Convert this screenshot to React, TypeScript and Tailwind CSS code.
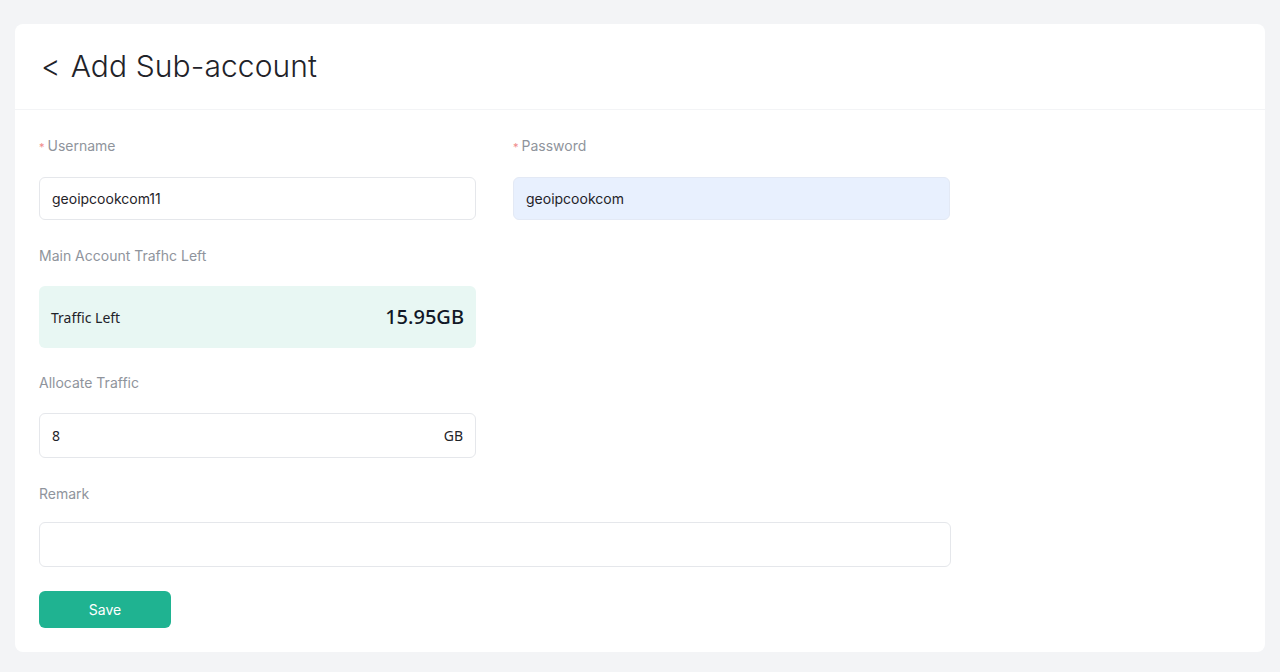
import { useState } from 'react'

export default function App() {
  const [username, setUsername] = useState('geoipcookcom11')
  const [password, setPassword] = useState('geoipcookcom')
  const [traffic, setTraffic] = useState('8')
  const [remark, setRemark] = useState('')

  return (
    <div className="min-h-[672px] bg-[#f3f4f6] px-[15px] pt-[24px] pb-[20px] font-['Inter',sans-serif]">
      <div className="bg-white rounded-lg h-[628px]">
        <div className="h-[86px] flex items-center px-[26px] border-b border-[#f3f4f6]">
          <h1 className="text-[30px] text-[#1f2329] font-light tracking-[0.1px]">
            <span className="mr-[10px]">&lt;</span>Add Sub-account
          </h1>
        </div>

        <div className="px-[24px] pt-[26px]">
          <div className="grid grid-cols-[437px_437px] gap-x-[37px]">
            <div>
              <label className="block text-[14px] text-[#8f949c] h-[20px] leading-[20px]">
                <span className="text-[#f08a8a] text-[11px] mr-[3px]">*</span>Username
              </label>
              <input
                value={username}
                onChange={(e) => setUsername(e.target.value)}
                className="mt-[21px] w-full h-[43px] px-[12px] text-[14px] text-[#1f2329] border border-[#e5e7eb] rounded-md outline-none"
              />
            </div>
            <div>
              <label className="block text-[14px] text-[#8f949c] h-[20px] leading-[20px]">
                <span className="text-[#f08a8a] text-[11px] mr-[3px]">*</span>Password
              </label>
              <input
                value={password}
                onChange={(e) => setPassword(e.target.value)}
                className="mt-[21px] w-full h-[43px] px-[12px] text-[14px] text-[#1f2329] bg-[#e8f0fe] border border-[#e3e9f5] rounded-md outline-none"
              />
            </div>
          </div>

          <div className="w-[437px] mt-[26px]">
            <div className="text-[14px] text-[#8f949c] h-[20px] leading-[20px]">Main Account Trafhc Left</div>
            <div className="mt-[20px] h-[62px] bg-[#e8f7f3] rounded-md flex items-center justify-between px-[12px] font-['Noto_Sans',sans-serif]">
              <span className="text-[14px] text-[#1f2329]">Traffic Left</span>
              <span className="text-[20px] font-medium text-[#111827]">15.95GB</span>
            </div>

            <div className="mt-[25px] text-[14px] text-[#8f949c] h-[20px] leading-[20px]">Allocate Traffic</div>
            <div className="mt-[20px] h-[45px] border border-[#e5e7eb] rounded-md flex items-center px-[12px] font-['Noto_Sans',sans-serif]">
              <input
                value={traffic}
                onChange={(e) => setTraffic(e.target.value)}
                className="flex-1 text-[14px] text-[#1f2329] outline-none bg-transparent"
              />
              <span className="text-[14px] text-[#1f2329]">GB</span>
            </div>
          </div>

          <div className="mt-[26px] text-[14px] text-[#8f949c] h-[20px] leading-[20px]">Remark</div>
          <input
            value={remark}
            onChange={(e) => setRemark(e.target.value)}
            className="mt-[18px] w-[912px] h-[45px] px-[12px] text-[14px] border border-[#e5e7eb] rounded-md outline-none"
          />

          <button
            type="button"
            className="mt-[24px] block w-[132px] h-[37px] bg-[#1fb391] hover:bg-[#1aa283] text-white text-[14px] rounded-md"
          >
            Save
          </button>
        </div>
      </div>
    </div>
  )
}
